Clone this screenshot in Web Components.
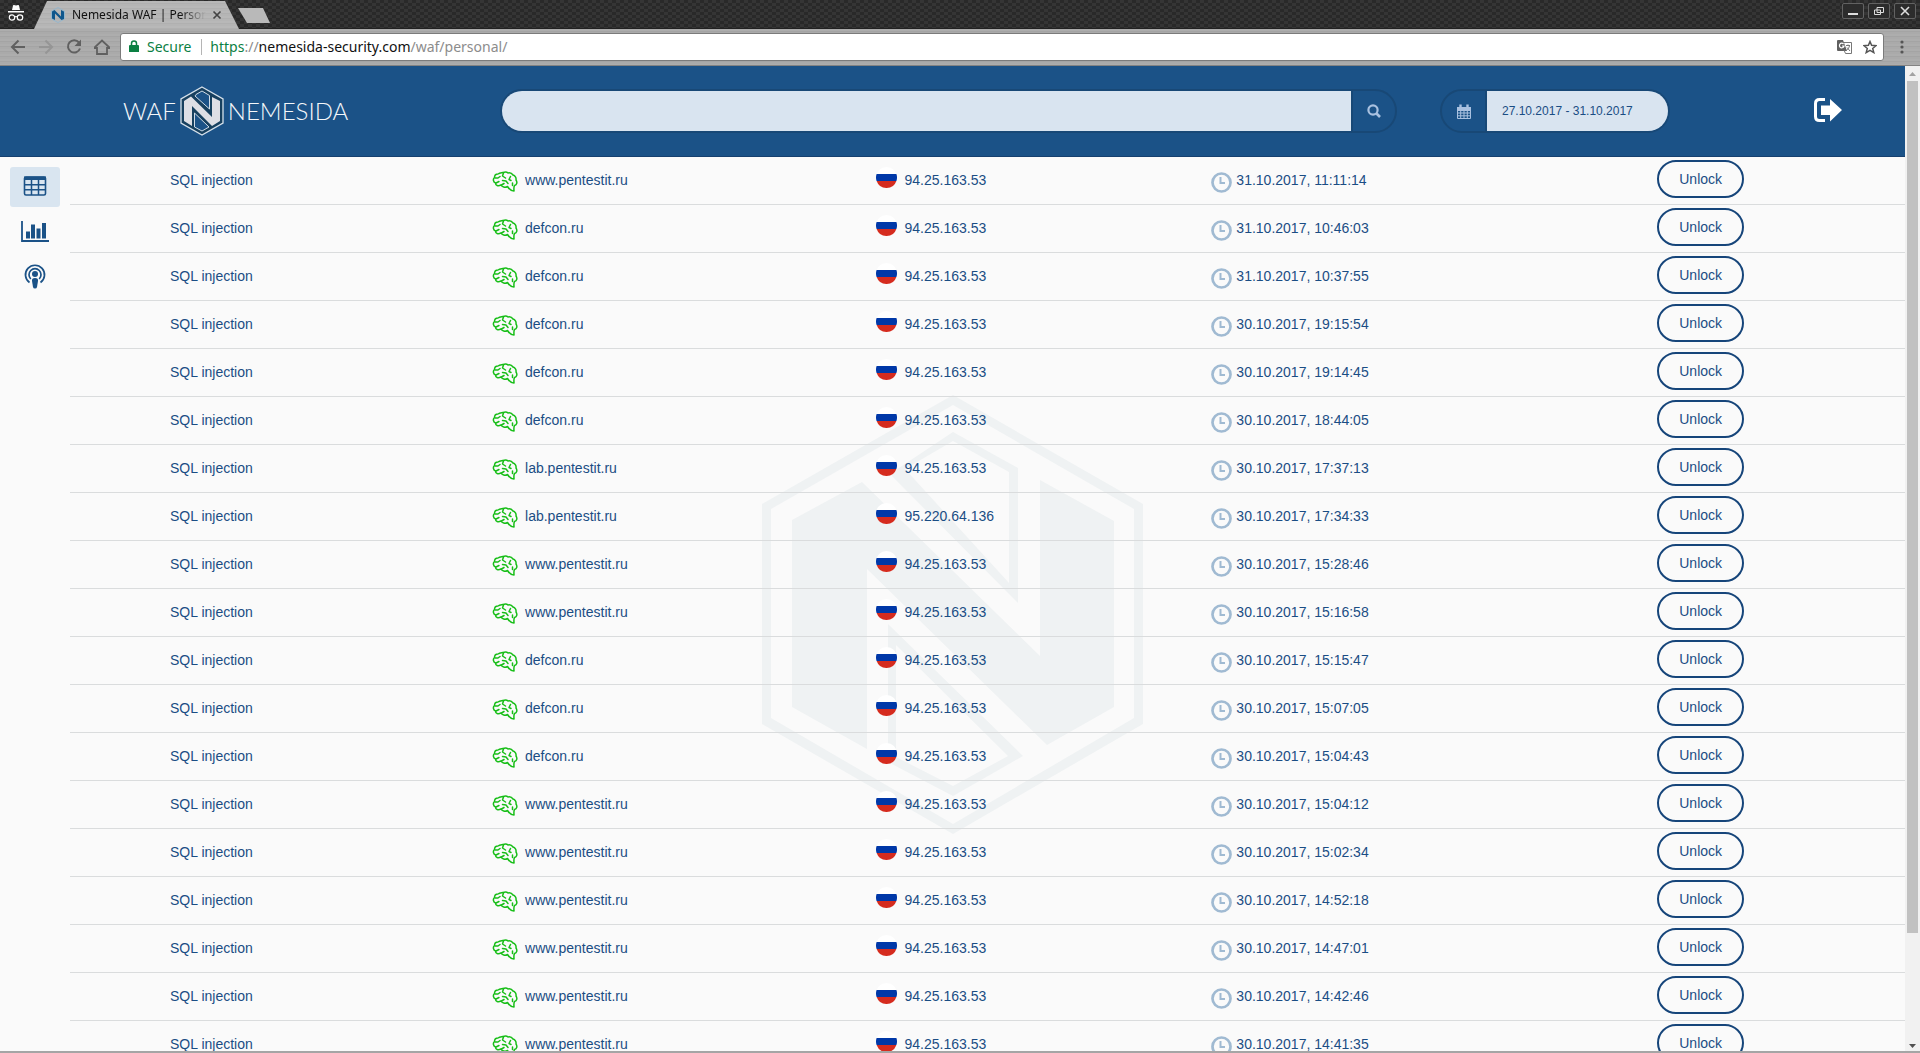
<!DOCTYPE html>
<html lang="en">
<head>
<meta charset="utf-8">
<title>Nemesida WAF | Personal</title>
<style>
  html, body { margin: 0; height: 100%; overflow: hidden; }
  body { font: 14px/20px "Liberation Sans", Arial, sans-serif; color: #1a4d84; background: #fafafa; }
</style>
</head>
<body>
<browser-window>
  <browser-tabs slot="tabs">Nemesida WAF | Personal</browser-tabs>
  <browser-toolbar slot="toolbar"></browser-toolbar>
  <waf-page>
    <waf-header slot="header"></waf-header>
    <waf-sidebar slot="sidebar"></waf-sidebar>
    <attack-table></attack-table>
  </waf-page>
</browser-window>

<script>
const define = (name, markup, setup) => {
  const template = document.createElement('template');
  template.innerHTML = markup;
  customElements.define(name, class extends HTMLElement {
    constructor() {
      super();
      this.attachShadow({ mode: 'open' }).append(template.content.cloneNode(true));
      if (setup) setup(this.shadowRoot, this);
    }
  });
};

/* ---------- icons ---------- */
const svg = (w, h, body) =>
  `<svg width="${w}" height="${h}" viewBox="0 0 ${w} ${h}" fill="none" aria-hidden="true">${body}</svg>`;

const watermark = svg(382, 440, `
  <path fill="#eff2f3" fill-rule="evenodd" d="M191 0 381 109V329L191 439 0 329V109ZM191 10 9 114V323L191 429 372 323V114Z"/>
  <path fill="#eff2f3" d="M30 125 100 87 278 261V85L352 126V312L285 350 105 174V354L30 312Z"/>
  <path fill="#eff2f3" fill-rule="evenodd" d="M191 37 256 73V208L128 79ZM191 46 143 74 247 188V77Z"/>
  <path fill="#eff2f3" fill-rule="evenodd" d="M126 229 261 361 191 401 126 367ZM134 250V362L191 391 246 361Z"/>`);

const logoMark = svg(44, 50, `
  <path fill="#17405f" stroke="#d5e0ea" stroke-width="1.3" d="M22 1 43 13V37L22 49 1 37V13Z"/>
  <path fill="#dedfe5" d="M4 15 11 10.500 32 31V11L40 15V35L32 40 12 20V40L4 35Z"/>
  <path fill="#1b5287" stroke="#cfdbe6" stroke-width="1" d="M16 8.500 22 5 29.500 9.500V23L15 10Z"/>
  <path fill="#1b5287" stroke="#cfdbe6" stroke-width="1" d="M14.500 27 29 41 22 45 14.500 41Z"/>`);

const favicon = svg(14, 16, `
  <path d="M7 .5 13.500 4V12L7 15.500.5 12V4Z" stroke="#8fb6cf" stroke-width=".9"/>
  <path fill="#0e568c" d="M1 4.500 3.500 3 10 9.500V3L13 4.500V12L10.500 13 4 6.500V13L1 11.500Z"/>`);

const brain = svg(26, 22, `
  <g stroke="#18be18" stroke-width="1.500" stroke-linecap="round" stroke-linejoin="round">
  <path d="M6 3C8 1.500 10 2 11 1.500 13 .8 15 1 16 2 18 1.500 20 2.500 21 4 23 4.500 24.500 7 24 9 25.500 11 25 14 22.500 14.500 21.500 16 22 18 22 20 19 20 17 18 15.500 15.500 13 17 10 16 9 14 6 15.500 3.500 14.500 3.500 12 1 11 .8 8 2.500 6.500 2.500 4.500 4 3 6 3Z"/>
  <path d="M3 7H6L8 5.500M4 12 7 10.500M11.500 2 10.500 5 13.500 7M10.500 9.500 14 10 16 12.500M18.500 5.500 17 8.500 19 9.500M9.500 14 12 12.500M20.500 12V14.500"/>
  </g>`);

const flag = svg(21, 21, `
  <circle cx="10.500" cy="10.500" r="10.500" fill="#fff"/>
  <path fill="#0038a8" d="M.6 7H20.400A10.500 10.500 0 0 1 20.400 14H.6A10.500 10.500 0 0 1 .6 7Z"/>
  <path fill="#d52b1e" d="M.6 14H20.400A10.500 10.500 0 0 1 .6 14Z"/>`);

const clock = svg(21, 22, `
  <circle cx="10.500" cy="11.500" r="9" stroke="#a0bad2" stroke-width="2.700"/>
  <path d="M9.500 6V12H14" stroke="#a0bad2" stroke-width="2"/>`);

/* ---------- browser chrome ---------- */
define('browser-window', `
  <style>
    :host { display: flex; flex-direction: column; height: 100vh; background: #a5a5a5; }
    .view { flex: 1; min-height: 0; display: flex; margin-bottom: 2px; }
    ::slotted(waf-page) { flex: 1; min-width: 0; }
    .bar { width: 15px; background: #f1f1f1; display: flex; flex-direction: column; align-items: center; }
    .thumb { width: 11px; flex: 0 0 86.5%; background: #c1c1c1; }
    .gap { flex: 1; }
    svg { flex: none; display: block; }
  </style>
  <slot name="tabs"></slot>
  <slot name="toolbar"></slot>
  <div class="view">
    <slot></slot>
    <div class="bar">
      ${svg(15, 15, '<path fill="#a3a3a3" d="M4 10 7.500 6 11 10Z"/>')}
      <div class="thumb"></div><div class="gap"></div>
      ${svg(15, 15, '<path fill="#505050" d="M4 8H11L7.500 12Z"/>')}
    </div>
  </div>`);

define('browser-tabs', `
  <style>
    :host {
      display: flex; align-items: flex-start; height: 29px; flex: none; box-sizing: border-box;
      font: 12px/16px "Noto Sans", sans-serif; color: #111;
      background: repeating-conic-gradient(#292929 0 25%, #353535 0 50%) 0 0 / 8px 6px;
      box-shadow: inset 0 -1px #222;
    }
    .incognito { margin: 4px 10px 0 8px; }
    .tab {
      width: 205px; height: 28px; margin-top: 1px; box-sizing: border-box; padding: 0 17px;
      display: flex; align-items: center;
      clip-path: polygon(0 100%, 13px 0, 191px 0, 100% 100%);
      background: repeating-linear-gradient(#b8b8b8 0 2px, #b0b0b0 2px 3px, #b5b5b5 3px 5px);
    }
    .name {
      flex: 1; margin-left: 7px; overflow: hidden; white-space: nowrap; min-width: 0;
      -webkit-mask-image: linear-gradient(90deg, #000 108px, transparent 134px);
      mask-image: linear-gradient(90deg, #000 108px, transparent 134px);
    }
    button { border: 0; background: none; padding: 0; display: flex; }
    .new { width: 32px; height: 15px; margin-top: 8px; background: #b9b9b9; clip-path: polygon(0 0, 25px 0, 100% 100%, 9px 100%); margin-left: -1px; }
    .controls { margin: 3px 4px 0 auto; display: flex; gap: 4px; }
    .controls button { width: 22px; height: 16px; box-sizing: border-box; border: 1px solid #626262; border-radius: 2px; background: #2c2c2c; align-items: center; justify-content: center; }
    .tab > svg, .tab > button { flex: none; }
  </style>
  <span class="incognito">${svg(16, 17, `
    <path fill="#fff" d="M4 6 5 1.500Q5.200 .8 6 1L8 1.500 10 1Q10.800.8 11 1.500L12 6ZM0 7H16V8.500H0Z"/>
    <circle cx="4" cy="13.500" r="2.700" stroke="#fff" stroke-width="1.200"/><circle cx="12" cy="13.500" r="2.700" stroke="#fff" stroke-width="1.200"/>
    <path d="M6.500 13Q8 12 9.500 13" stroke="#fff" stroke-width="1.200"/>`)}</span>
  <div class="tab">${favicon}<span class="name"><slot></slot></span>
    <button aria-label="Close tab">${svg(10, 10, '<path d="M1.500 1.500 8.500 8.500M8.500 1.500 1.500 8.500" stroke="#444" stroke-width="1.700"/>')}</button>
  </div>
  <button class="new" aria-label="New tab"></button>
  <div class="controls">
    <button aria-label="Minimize">${svg(12, 10, '<path d="M1 8H11" stroke="#ddd" stroke-width="2"/>')}</button>
    <button aria-label="Restore">${svg(12, 10, '<path d="M4 1.500H10.500V6.500H4ZM1.500 4H7.500V8.500H1.500Z" stroke="#ddd"/>')}</button>
    <button aria-label="Close">${svg(10, 10, '<path d="M1 1 9 9M9 1 1 9" stroke="#ddd" stroke-width="1.600"/>')}</button>
  </div>`);

define('browser-toolbar', `
  <style>
    :host {
      display: flex; align-items: center; height: 37px; flex: none; box-sizing: border-box; padding: 0 0 1px 10px;
      font: 14px/20px "Noto Sans", sans-serif; border-bottom: 1px solid #838383;
      background: repeating-linear-gradient(#adadad 0 2px, #a4a4a4 2px 3px, #aaa 3px 5px);
    }
    nav { display: flex; gap: 12px; width: 110px; align-items: center; }
    button { border: 0; background: none; padding: 0; display: flex; }
    .address {
      flex: 1; height: 28px; box-sizing: border-box; border: 1px solid #7b7b7b; border-radius: 3px;
      background: #fff; display: flex; align-items: center; padding: 0 6px 0 8px; color: #8c8c8c; white-space: nowrap;
    }
    .secure { color: #0b8043; margin-left: 8px; padding-right: 10px; border-right: 1px solid #b5b5b5; line-height: 16px; }
    .url { margin-left: 8px; flex: 1; }
    .url b { font-weight: 400; color: #111; }
    .url i { font-style: normal; color: #0b8043; }
    .actions { display: flex; gap: 11px; align-items: center; }
    .menu { width: 36px; justify-content: center; }
  </style>
  <nav>
    <button aria-label="Back">${svg(16, 16, '<path d="M15 8H2M8.500 1.500 2 8 8.500 14.500" stroke="#606060" stroke-width="2"/>')}</button>
    <button aria-label="Forward">${svg(16, 16, '<path d="M1 8H14M7.500 1.500 14 8 7.500 14.500" stroke="#959595" stroke-width="2"/>')}</button>
    <button aria-label="Reload">${svg(16, 16, '<path d="M13 3.500A6.200 6.200 0 1 0 14 9.500" stroke="#606060" stroke-width="2"/><path fill="#606060" d="M15 .5V7H8.500Z"/>')}</button>
    <button aria-label="Home">${svg(16, 16, '<path d="M0 9H3V15H13V9H16L8 1.500 0 9Z" stroke="#606060" stroke-width="1.800"/>')}</button>
  </nav>
  <div class="address">
    ${svg(10, 13, '<path fill="#0b8043" d="M1 5H9Q10 5 10 6V12H0V6Q0 5 1 5Z"/><path d="M2.500 5V3.500Q2.500 1 5 1T7.500 3.500V5" stroke="#0b8043" stroke-width="1.500"/>')}
    <span class="secure">Secure</span>
    <span class="url"><i>https</i>://<b>nemesida-security.com</b>/waf/personal/</span>
    <span class="actions">
      <button aria-label="Translate this page">${svg(15, 14, `
        <path fill="#606060" d="M1 0H6L10 11H1Q0 11 0 10V1Q0 0 1 0Z"/><path d="M7 2.500H14.500V13.500H8.500L7 10" stroke="#777"/>
        <path d="M6.500 4A2.300 2.300 0 1 0 7 6H5" stroke="#fff" stroke-width="1.200"/><path d="M9 5.500H13M11 4.500V5.500M12.500 6Q12 9 9.500 10M10 7.500 13 11" stroke="#777"/>`)}</button>
      <button aria-label="Bookmark this page">${svg(14, 14, '<path d="M7 1.500 8.600 5.300 13 5.700 9.700 8.500 10.800 12.600 7 10.400 3.200 12.600 4.300 8.500 1 5.700 5.400 5.300Z" stroke="#555" stroke-width="1.500"/>')}</button>
    </span>
  </div>
  <button class="menu" aria-label="Menu">${svg(4, 14, '<g fill="#555"><circle cx="2" cy="2" r="1.600"/><circle cx="2" cy="7" r="1.600"/><circle cx="2" cy="12" r="1.600"/></g>')}</button>`);

/* ---------- page ---------- */
define('waf-page', `
  <style>
    :host { display: flex; flex-direction: column; overflow: hidden; background: #fafafa; }
    .body { display: grid; grid-template-columns: 70px 1fr; flex: 1; min-height: 0; }
    .mark { grid-area: 1 / 1 / 2 / 3; justify-self: center; margin-top: 238px; }
    .mark svg { display: block; }
    ::slotted(waf-sidebar) { grid-area: 1 / 1; }
    ::slotted(attack-table) { grid-area: 1 / 2; min-width: 0; }
  </style>
  <slot name="header"></slot>
  <div class="body">
    <div class="mark">${watermark}</div>
    <slot name="sidebar"></slot>
    <slot></slot>
  </div>`);

define('waf-logo', `
  <style>
    :host { display: flex; align-items: center; gap: 4px; color: #f4f7fa; white-space: nowrap; font: 300 24px/50px Lato, sans-serif; }
    svg { display: block; flex: none; }
  </style>
  <span>WAF</span>${logoMark}<span>NEMESIDA</span>`);

define('waf-header', `
  <style>
    :host { display: flex; align-items: center; height: 91px; flex: none; box-sizing: border-box; padding: 0 63px 0 123px; background: #1b5287; border-bottom: 1px solid #16406f; }
    waf-logo { flex: none; width: 224px; margin-right: 153px; }
    .group { display: flex; height: 44px; box-sizing: border-box; border: 2px solid #184876; border-radius: 22px; overflow: hidden; }
    .search { flex: 1; margin-right: 43px; }
    .date { flex: none; width: 230px; margin-right: 144px; }
    input { flex: 1; min-width: 0; border: 0; outline: 0; margin: 0; padding: 0 15px; background: #d9e4f0; color: #1a4d84; font: 12px/20px "Liberation Sans", Arial, sans-serif; }
    .search button { width: 44px; border: 0; border-left: 2px solid #184876; background: none; padding: 0; display: flex; align-items: center; justify-content: center; }
    .date label { width: 43px; border-right: 2px solid #184876; display: flex; align-items: center; justify-content: center; }
    a { display: flex; }
  </style>
  <waf-logo></waf-logo>
  <form class="group search">
    <input type="search" aria-label="Search">
    <button type="button" aria-label="Find">${svg(14, 14, '<circle cx="6" cy="6" r="4.600" stroke="#a9c1e0" stroke-width="2.200"/><path d="M9.500 9.500 13 13" stroke="#a9c1e0" stroke-width="2.600"/>')}</button>
  </form>
  <div class="group date">
    <label for="range" aria-label="Date range">${svg(14, 15, `
      <path d="M.5 3.500H13.500V14.500H.5ZM.5 6.500H13.500M.5 9H13.500M.5 11.800H13.500M3.700 6V14.500M7 6V14.500M10.300 6V14.500" stroke="#a9c1e0"/>
      <path fill="#a9c1e0" d="M0 3H14V6H0Z"/><path d="M3.500.5V4M10.500.5V4" stroke="#a9c1e0" stroke-width="2.400"/>`)}</label>
    <input id="range" value="27.10.2017 - 31.10.2017">
  </div>
  <a href="#logout" aria-label="Log out">${svg(28, 26, `
    <path d="M11 1.500H5.500Q1.500 1.500 1.500 5.500V18.500Q1.500 22.500 5.500 22.500H11" stroke="#fff" stroke-width="3"/>
    <path fill="#fff" d="M16 1 28 12 16 23.500V17H7V7.500H16Z"/>`)}</a>`);

define('waf-sidebar', `
  <style>
    :host { display: block; }
    nav { display: flex; flex-direction: column; gap: 5px; padding: 10px; }
    a { height: 40px; display: flex; align-items: center; justify-content: center; border-radius: 3px; }
    a[aria-current] { background: #d9e5f0; }
  </style>
  <nav>
    <a href="#table" aria-current="page" aria-label="Attacks">${svg(24, 24, `
      <rect x="1.500" y="2" width="21" height="18" rx="1.500" stroke="#1b5287" stroke-width="1.600"/>
      <path fill="#1b5287" d="M1 1.500H23V5H1Z"/><path d="M1.500 9.800H22.500M1.500 14.800H22.500M8.500 5V20M15.500 5V20" stroke="#1b5287" stroke-width="1.500"/>`)}</a>
    <a href="#charts" aria-label="Charts">${svg(28, 24, `
      <path d="M1 1V21H28" stroke="#1b5287" stroke-width="1.800"/>
      <path fill="#1b5287" d="M5 11.500H9V18.500H5ZM10 4.500H14V18.500H10ZM15.500 8.500H19.500V18.500H15.500ZM21 3H25V18.500H21Z"/>`)}</a>
    <a href="#monitor" aria-label="Monitor">${svg(22, 26, `
      <g stroke="#1b5287" stroke-width="1.700"><path d="M5.500 18.500A9.500 9.500 0 1 1 16.500 18.500"/><path d="M6.800 15A6 6 0 1 1 15.200 15"/></g>
      <circle cx="11" cy="10" r="3" fill="#1b5287"/><path fill="#1b5287" d="M11 14Q14.500 14 14 17L13 23Q12.700 24.500 11 24.500T9 23L8 17Q7.500 14 11 14Z"/>`)}</a>
  </nav>`);

const P = 'www.pentestit.ru', D = 'defcon.ru', L = 'lab.pentestit.ru', IP = '94.25.163.53';
const attacks = [
  [P, IP, '31.10.2017, 11:11:14'], [D, IP, '31.10.2017, 10:46:03'], [D, IP, '31.10.2017, 10:37:55'],
  [D, IP, '30.10.2017, 19:15:54'], [D, IP, '30.10.2017, 19:14:45'], [D, IP, '30.10.2017, 18:44:05'],
  [L, IP, '30.10.2017, 17:37:13'], [L, '95.220.64.136', '30.10.2017, 17:34:33'], [P, IP, '30.10.2017, 15:28:46'],
  [P, IP, '30.10.2017, 15:16:58'], [D, IP, '30.10.2017, 15:15:47'], [D, IP, '30.10.2017, 15:07:05'],
  [D, IP, '30.10.2017, 15:04:43'], [P, IP, '30.10.2017, 15:04:12'], [P, IP, '30.10.2017, 15:02:34'],
  [P, IP, '30.10.2017, 14:52:18'], [P, IP, '30.10.2017, 14:47:01'], [P, IP, '30.10.2017, 14:42:46'],
  [P, IP, '30.10.2017, 14:41:35'],
];

define('unlock-button', `
  <style>
    :host { display: block; }
    button { height: 38px; padding: 0 20px; border: 2px solid #16457a; border-radius: 19px; background: #fafafa; color: #1a4d84; font: 14px/20px "Liberation Sans", Arial, sans-serif; display: block; }
  </style>
  <button><slot></slot></button>`);

define('attack-table', `
  <style>
    :host { display: block; }
    table { width: 100%; table-layout: fixed; border-collapse: separate; border-spacing: 0; }
    td { height: 47px; padding: 0; border-bottom: 1px solid #dadcdd; vertical-align: top; }
    .type { width: 23%; } .site { width: 20.9%; } .ip { width: 18.3%; } .time { width: 24.3%; }
    td > div { display: flex; align-items: flex-start; padding-top: 13px; white-space: nowrap; }
    .type > div { padding-left: 100px; }
    svg { display: block; flex: none; }
    .site > div { gap: 7px; }
    .site svg, .time svg { margin-top: 1px; }
    .ip > div { gap: 8px; }
    .ip svg { margin-top: -3px; }
    .time > div { gap: 4px; }
    unlock-button { margin-top: 3px; }
  </style>
  <table><tbody></tbody></table>`, root => {
  root.querySelector('tbody').innerHTML = attacks.map(([site, ip, time]) => `
    <tr>
      <td class="type"><div>SQL injection</div></td>
      <td class="site"><div>${brain}<span>${site}</span></div></td>
      <td class="ip"><div>${flag}<span>${ip}</span></div></td>
      <td class="time"><div>${clock}<span>${time}</span></div></td>
      <td><unlock-button>Unlock</unlock-button></td>
    </tr>`).join('');
});
</script>
</body>
</html>
